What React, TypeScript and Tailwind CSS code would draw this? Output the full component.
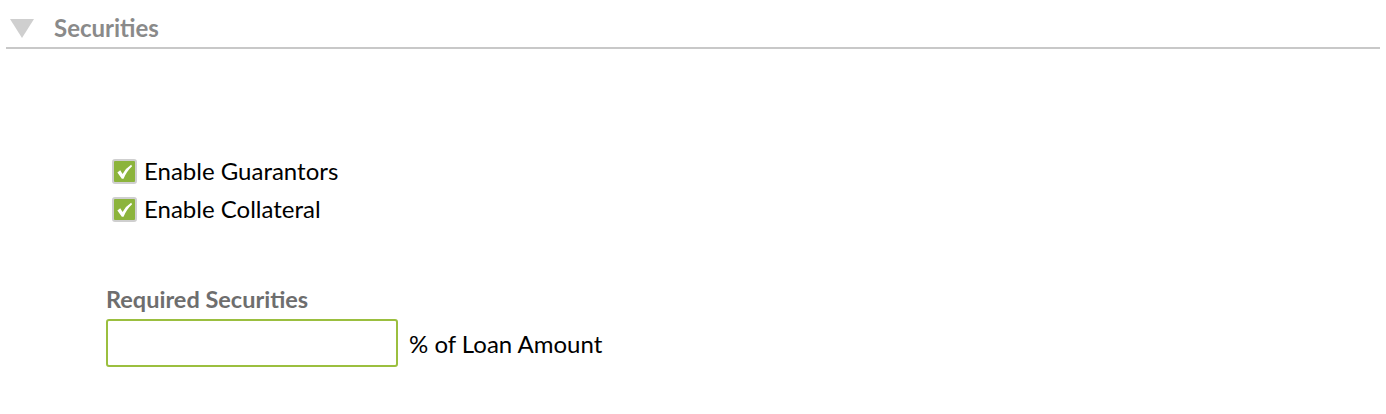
import { useState } from 'react'

function GreenCheck({ label, checked, onToggle }: { label: string; checked: boolean; onToggle: () => void }) {
  return (
    <label className="flex items-center gap-[7px] h-[38px] cursor-pointer" onClick={onToggle}>
      <span className="flex size-[25px] items-center justify-center rounded-[3px] border-2 border-[#cfcfcf] bg-[#8cb43c]">
        {checked && (
          <svg viewBox="0 0 20 20" className="size-[19px]">
            <path d="M2.5 11 L5.5 8.8 L8 12.5 Q11.5 6.5 17 3 L18 4.5 Q12.5 9.5 9 17.5 L7.2 17.5 Z" fill="#fff" />
          </svg>
        )}
      </span>
      <span className="text-[24px] text-black leading-none">{label}</span>
    </label>
  )
}

export default function App() {
  const [guarantors, setGuarantors] = useState(true)
  const [collateral, setCollateral] = useState(true)

  return (
    <div className="w-[1386px] h-[414px] bg-white font-['Lato','Liberation_Sans',sans-serif]">
      {/* section header */}
      <div className="mx-[6px] flex items-center gap-[20px] h-[49px] border-b-2 border-[#c8c8c8] pt-[10px] pl-[4px] pr-[8px]">
        <svg viewBox="0 0 24 19" className="w-[24px] h-[19px]">
          <path d="M0 0 H24 L12 19 Z" fill="#cfcfcf" />
        </svg>
        <h2 className="text-[24px] font-bold text-[#8a8a8a] leading-none -mt-[1px]">Securities</h2>
      </div>

      <div className="pl-[112px] pt-[103px]">
        <GreenCheck label="Enable Guarantors" checked={guarantors} onToggle={() => setGuarantors(!guarantors)} />
        <GreenCheck label="Enable Collateral" checked={collateral} onToggle={() => setCollateral(!collateral)} />
      </div>

      <div className="pl-[106px] pt-[60px]">
        <div className="text-[23.5px] font-bold text-[#6e6e6e] leading-none mb-[7px]">Required Securities</div>
        <div className="flex items-center gap-[11px]">
          <input type="text" className="w-[292px] h-[48px] rounded-[3px] border-2 border-[#9bbf3f] px-3 text-[20px] outline-none" />
          <span className="text-[24px] text-black mt-[3px]">% of Loan Amount</span>
        </div>
      </div>
    </div>
  )
}
